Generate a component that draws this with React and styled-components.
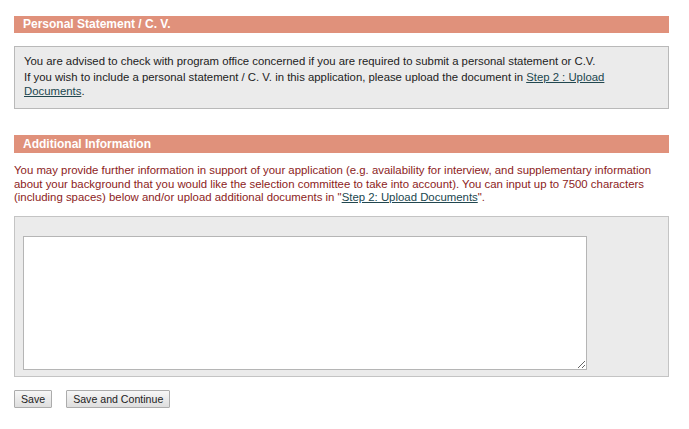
import styled, { createGlobalStyle } from 'styled-components';

const GlobalStyle = createGlobalStyle`
  body {
    margin: 0;
    background: #fff;
    font-family: 'Liberation Sans', Arial, sans-serif;
  }
`;

const Page = styled.div`
  width: 655px;
  padding: 16px 0 0 14px;
`;

const SectionHeader = styled.h2`
  margin: ${({ $top }) => $top || 0}px 0 0 0;
  height: ${({ $height }) => $height || 17}px;
  line-height: ${({ $height }) => $height || 17}px;
  padding: 0 9px;
  background: #e0917b;
  color: #fff;
  font-size: 12px;
  font-weight: bold;
`;

const NoteBox = styled.div`
  margin-top: 13px;
  padding: 7px 9px 8px 9px;
  background: #ebebeb;
  border: 1px solid #b9b9b9;
  color: #222;
  font-size: 11.35px;
  line-height: 14px;
`;

const NoteLine = styled.p`
  margin: 0 0 2px 0;
`;

const Link = styled.a`
  color: #21474f;
  text-decoration: underline;
`;

const Intro = styled.p`
  margin: 11px 0 0 0;
  color: #8c1c1c;
  font-size: 11.4px;
  line-height: 13.5px;
`;

const InputPanel = styled.div`
  margin-top: 11px;
  padding: 19px 8px 6px 8px;
  background: #ebebeb;
  border: 1px solid #c4c4c4;
`;

const TextArea = styled.textarea`
  display: block;
  width: 564px;
  height: 134px;
  box-sizing: border-box;
  margin: 0;
  border: 1px solid #b5b5b5;
  background: #fff;
  resize: both;
  font-family: 'Liberation Sans', Arial, sans-serif;
  font-size: 12px;
`;

const ButtonRow = styled.div`
  display: flex;
  gap: 14px;
  margin-top: 13px;
`;

const Button = styled.button`
  height: 18px;
  padding: 0 6px;
  border: 1px solid #acacac;
  border-radius: 1px;
  background: linear-gradient(#f6f6f6, #dedede);
  color: #222;
  font-family: 'Liberation Sans', Arial, sans-serif;
  font-size: 10.6px;
  line-height: 16px;
`;

export default function App() {
  return (
    <Page>
      <GlobalStyle />
      <SectionHeader>Personal Statement / C. V.</SectionHeader>
      <NoteBox>
        <NoteLine>
          You are advised to check with program office concerned if you are required to submit a personal statement or C.V.
        </NoteLine>
        <NoteLine>
          If you wish to include a personal statement / C. V. in this application, please upload the document in{' '}
          <Link href="#">Step 2 : Upload Documents</Link>.
        </NoteLine>
      </NoteBox>

      <SectionHeader $top={26} $height={18}>Additional Information</SectionHeader>
      <Intro>
        You may provide further information in support of your application (e.g. availability for interview, and supplementary information
        about your background that you would like the selection committee to take into account). You can input up to 7500 characters
        (including spaces) below and/or upload additional documents in "<Link href="#">Step 2: Upload Documents</Link>".
      </Intro>
      <InputPanel>
        <TextArea />
      </InputPanel>

      <ButtonRow>
        <Button>Save</Button>
        <Button>Save and Continue</Button>
      </ButtonRow>
    </Page>
  );
}
